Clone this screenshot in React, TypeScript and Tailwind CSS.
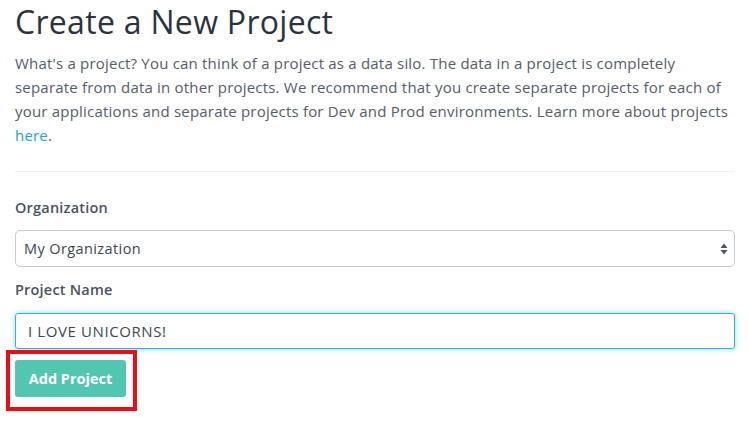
import React from "react";

const font = { fontFamily: '"Open Sans", "Liberation Sans", sans-serif' };

const SelectArrows = () => (
    <svg width="8" height="12" viewBox="0 0 8 12" className="text-[#4b5563]">
        <path d="M4 0.5 L7.5 5 L0.5 5 Z" fill="currentColor" />
        <path d="M4 11.5 L7.5 7 L0.5 7 Z" fill="currentColor" />
    </svg>
);

const App = () => {
    return (
        <div className="w-[748px] h-[423px] bg-white overflow-hidden" style={font}>
            <div className="pl-[15px] pr-[13px]">
                <h1 className="mt-[2px] h-[40px] leading-[40px] text-[32px] font-normal text-[#2b333e] tracking-[0.3px]">
                    Create a New Project
                </h1>
                <p className="mt-[9px] text-[15px] leading-[24px] text-[#545d69] tracking-[0.2px] whitespace-nowrap">
                    What's a project? You can think of a project as a data silo. The data in a project is completely
                    <br />
                    separate from data in other projects. We recommend that you create separate projects for each of
                    <br />
                    your applications and separate projects for Dev and Prod environments. Learn more about projects
                    <br />
                    <a className="text-[#1ba3d4]">here</a>.
                </p>
                <div className="mt-[24px] h-px bg-[#eeeff1]" />

                <label className="block mt-[26px] h-[20px] leading-[20px] text-[14.5px] font-semibold text-[#4a5361] tracking-[0.2px]">
                    Organization
                </label>
                <div className="mt-[12px] h-[37px] flex items-center justify-between rounded-[5px] border border-[#c5ccd4] pl-[8px] pr-[6px]">
                    <span className="text-[14.5px] text-[#3d4652] tracking-[0.4px]">My Organization</span>
                    <SelectArrows />
                </div>

                <label className="block mt-[13px] h-[20px] leading-[20px] text-[14.5px] font-semibold text-[#4a5361] tracking-[0.2px]">
                    Project Name
                </label>
                <div className="mt-[13px] h-[36px] flex items-center rounded-[3px] border border-[#2bb3df] shadow-[0_0_5px_rgba(43,179,223,0.55)] pl-[12px]">
                    <span className="text-[15px] text-[#3d4652] tracking-[0.6px]">I LOVE UNICORNS!</span>
                </div>

                <div className="relative mt-[11px] w-fit">
                    <button className="h-[37px] w-[111px] rounded-[3px] bg-[#53c6b1] text-white text-[14.5px] font-bold">
                        Add Project
                    </button>
                    <div className="absolute left-[-9px] top-[-10px] w-[131px] h-[61px] border-4 border-[#ee0c14]" />
                </div>
            </div>
        </div>
    );
};

export default App;
